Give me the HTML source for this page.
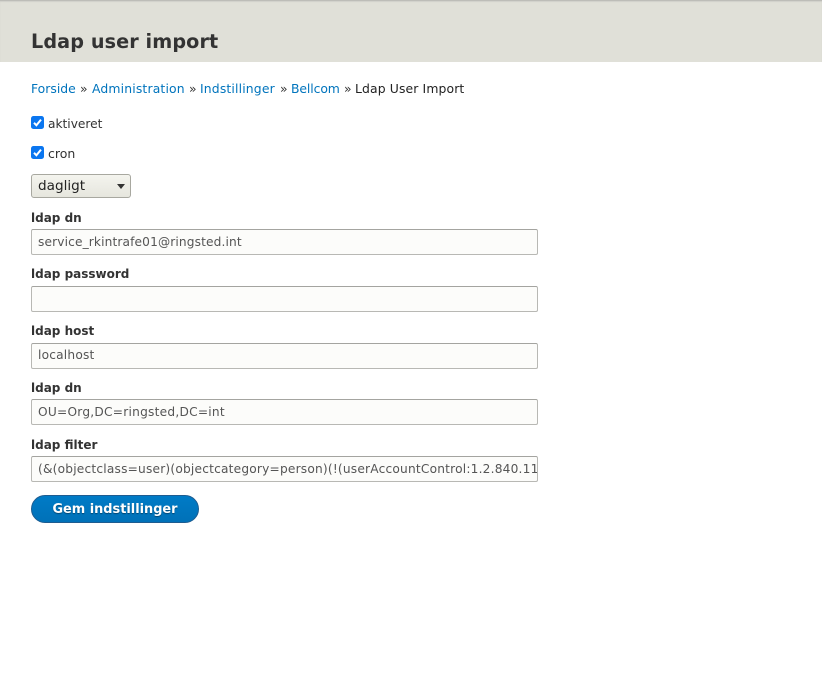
<!DOCTYPE html>
<html><head><meta charset="utf-8"><style>
html,body{margin:0;padding:0;background:#fff;width:822px;height:680px;overflow:hidden}
body{position:relative;font-family:"DejaVu Sans","Liberation Sans",sans-serif;font-size:12.2px;color:#333}
.t{position:absolute;white-space:nowrap;line-height:16px}
a{color:#0074bd;text-decoration:none}
#hd{position:absolute;left:0;top:0;width:822px;height:62px;background:#e0e0d8;border-top:1px solid #bdbdb8;box-sizing:border-box;box-shadow:inset 0 1px 1px #d0d0ca}
h1{position:absolute;left:31px;top:29px;margin:0;font-size:19.2px;line-height:26px;font-weight:bold;color:#333;white-space:nowrap;letter-spacing:.1px}
.cb{position:absolute;left:31px;width:13px;height:13px;border-radius:2.5px;background:#0a76f0}
.cb svg{position:absolute;left:0;top:0}
.sel{position:absolute;left:31px;top:174px;width:100px;height:24px;box-sizing:border-box;border:1px solid #a8a8a0;border-radius:3px;background:linear-gradient(#f4f4ee,#e6e6de)}
.arr{position:absolute;left:117px;top:184px;width:0;height:0;border-left:4.5px solid transparent;border-right:4.5px solid transparent;border-top:5px solid #333}
.in{position:absolute;left:31px;width:507px;height:26px;box-sizing:border-box;background:#fcfcfa;border:1px solid #b8b8b4;border-top-color:#a4a4a0;border-radius:2px}
.v{color:#555;font-size:12.2px;left:38px}
.l{left:31px;font-weight:bold;font-size:12px;color:#333}
.b{top:81px;font-size:12.4px}
.btn{position:absolute;left:31px;top:495px;width:168px;height:28px;box-sizing:border-box;border:1px solid #1e5c90;border-radius:14px;background:linear-gradient(#007bc6,#0071b8);color:#fff;font-weight:bold;font-size:12.9px;line-height:28px;text-align:center;text-shadow:0 1px 1px rgba(0,0,0,.4)}
</style></head><body>
<div id="hd"></div>
<h1>Ldap user import</h1>
<div class="t b" style="left:31px"><a href="#">Forside</a></div>
<div class="t b" style="left:80px">»</div>
<div class="t b" style="left:92px;letter-spacing:.15px"><a href="#">Administration</a></div>
<div class="t b" style="left:189px">»</div>
<div class="t b" style="left:200px;letter-spacing:.15px"><a href="#">Indstillinger</a></div>
<div class="t b" style="left:280px">»</div>
<div class="t b" style="left:291px;letter-spacing:-.1px"><a href="#">Bellcom</a></div>
<div class="t b" style="left:344px">»</div>
<div class="t b" style="left:355px;letter-spacing:.12px;color:#222">Ldap User Import</div>

<div class="cb" style="top:116px"><svg width="13" height="13" viewBox="0 0 13 13"><path d="M3 6.8L5.4 9.3L10 3.6" fill="none" stroke="#fff" stroke-width="2"/></svg></div>
<div class="t" style="left:48px;top:116px">aktiveret</div>
<div class="cb" style="top:146px"><svg width="13" height="13" viewBox="0 0 13 13"><path d="M3 6.8L5.4 9.3L10 3.6" fill="none" stroke="#fff" stroke-width="2"/></svg></div>
<div class="t" style="left:48px;top:146px;font-size:12.5px">cron</div>

<div class="sel"></div><div class="t" style="left:38px;top:178px;font-size:13.6px;color:#222">dagligt</div><div class="arr"></div>

<div class="t l" style="top:210px">ldap dn</div>
<div class="in" style="top:229px"></div><div class="t v" style="top:234px;letter-spacing:.13px">service_rkintrafe01@ringsted.int</div>
<div class="t l" style="top:266px">ldap password</div>
<div class="in" style="top:286px"></div>
<div class="t l" style="top:323px">ldap host</div>
<div class="in" style="top:343px"></div><div class="t v" style="top:347px;letter-spacing:.2px">localhost</div>
<div class="t l" style="top:380px">ldap dn</div>
<div class="in" style="top:399px"></div><div class="t v" style="top:404px;letter-spacing:.24px">OU=Org,DC=ringsted,DC=int</div>
<div class="t l" style="top:437px">ldap filter</div>
<div class="in" style="top:456px"></div><div style="position:absolute;left:38px;top:456px;width:499px;height:26px;overflow:hidden"><div class="t v" style="left:0;top:5px;letter-spacing:.2px">(&amp;(objectclass=user)(objectcategory=person)(!(userAccountControl:1.2.840.113556.1.4.803:=2)))</div></div>
<div class="btn">Gem indstillinger</div>
</body></html>
